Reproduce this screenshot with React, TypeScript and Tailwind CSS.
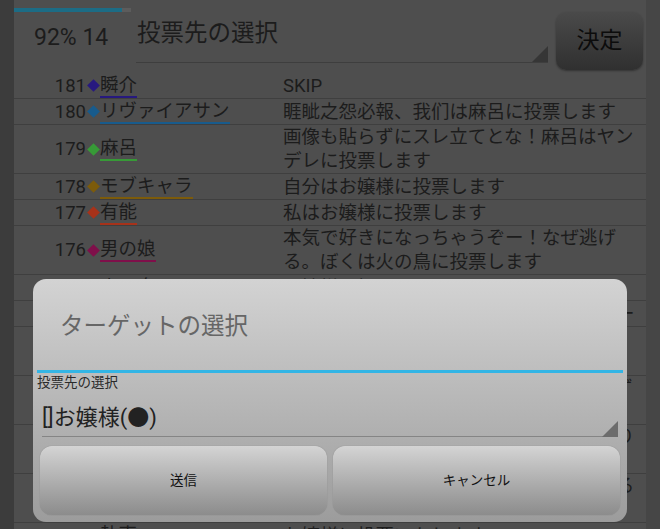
import React from "react";

type Row = {
  no: number;
  name: string;
  color: string;
  lines: string[];
};

const rows: Row[] = [
  { no: 181, name: "瞬介", color: "#27197f", lines: ["SKIP"] },
  { no: 180, name: "リヴァイアサン", color: "#185b8c", lines: ["睚眦之怨必報、我们は麻呂に投票します"] },
  { no: 179, name: "麻呂", color: "#379a37", lines: ["画像も貼らずにスレ立てとな！麻呂はヤン", "デレに投票します"] },
  { no: 178, name: "モブキャラ", color: "#7c5b0b", lines: ["自分はお嬢様に投票します"] },
  { no: 177, name: "有能", color: "#a7321a", lines: ["私はお嬢様に投票します"] },
  { no: 176, name: "男の娘", color: "#7f0f4a", lines: ["本気で好きになっちゃうぞー！なぜ逃げ", "る。ぼくは火の鳥に投票します"] },
  { no: 175, name: "火の鳥", color: "#a7321a", lines: ["お嬢様に投票するよ"] },
  { no: 174, name: "お嬢様", color: "#7c5b0b", lines: ["わたくしは男の娘に投票いたしますわよー"] },
  { no: 173, name: "ハカセ", color: "#379a37", lines: ["ふむ、データによれば有能が怪しいと", "出ているが今回は男の娘に投票する"] },
  { no: 172, name: "委員長", color: "#185b8c", lines: ["みなさん落ち着いて議論しましょう。まず", "は火の鳥に投票します"] },
  { no: 171, name: "番長", color: "#27197f", lines: ["オレはお嬢様に入れるぜ文句あるやつあり", "かかってこいよ"] },
  { no: 170, name: "妹", color: "#7f0f4a", lines: ["お兄ちゃんと同じにするね。妹もそうする", "投票しますっ！"] },
  { no: 169, name: "執事", color: "#7c5b0b", lines: ["お嬢様に投票いたします"] },
];

const font = "font-['Roboto','Noto_Sans_CJK_JP',sans-serif]";

export default function App() {
  return (
    <div className={`relative flex h-[529px] w-[660px] overflow-hidden bg-[#3d3d3d] ${font}`}>
      <div className="w-[14px] shrink-0 bg-[#3c3c3c]" />
      <div className="flex w-[632px] shrink-0 flex-col bg-[#4e4e4e]">
        {/* header */}
        <div className="flex h-[73px] shrink-0">
          <div className="flex w-[122px] shrink-0 flex-col">
            <div className="mt-[8px] flex h-[4px] w-[117px]">
              <div className="w-[108px] bg-[#1c6c85]" />
              <div className="flex-1 bg-[#5c5c5c]" />
            </div>
            <div className="mt-[13px] pl-[20px] text-[23px] leading-[26px] text-[#1c1c1c]">92% 14</div>
          </div>
          <div className="flex h-[63px] w-[412px] shrink-0 items-start justify-between border-b border-[#3e3e3e]">
            <span className="pl-[1px] pt-[18px] text-[23.5px] leading-[30px] text-[#1c1c1c]">投票先の選択</span>
            <svg className="mt-[46px]" width="16" height="16" viewBox="0 0 16 16">
              <polygon points="16,0 16,16 0,16" fill="#363636" />
            </svg>
          </div>
          <div className="ml-[8px] mt-[12px] flex h-[58px] w-[87px] items-center justify-center rounded-[10px] bg-gradient-to-b from-[#4a4a4a] to-[#303030] shadow-[0_1px_2px_rgba(0,0,0,0.35)]">
            <span className="text-[23px] text-[#0c0c0c]">決定</span>
          </div>
        </div>

        {/* list */}
        {rows.map((row) => (
          <div key={row.no} className="flex shrink-0 border-b border-[#3f3f3f] text-[18.5px] leading-[24px] text-[#1c1c1c]">
            <div className={`flex w-[269px] shrink-0 items-center ${row.lines.length > 1 ? "h-[48px]" : "h-[25px]"}`}>
              <span className="w-[72px] text-right">{row.no}</span>
              <span className="flex w-[14px] justify-center">
                <span className="h-[9px] w-[9px] rotate-45" style={{ backgroundColor: row.color }} />
              </span>
              <span className="border-b-2 leading-[22px]" style={{ borderColor: row.color }}>
                {row.name}
              </span>
            </div>
            <div className={`flex w-[363px] flex-col justify-center overflow-hidden whitespace-nowrap ${row.lines.length > 1 ? "h-[48px]" : "h-[25px]"}`}>
              {row.lines.map((line) => (
                <span key={line}>{line}</span>
              ))}
            </div>
          </div>
        ))}
      </div>
      <div className="w-[14px] shrink-0 bg-[#464646]" />

      {/* dialog */}
      <div className="absolute left-[33px] top-[279px] flex h-[243px] w-[594px] flex-col rounded-[13px] bg-gradient-to-b from-[#d3d3d3] to-[#9c9c9c]">
        <div className="flex h-[91px] shrink-0 items-center pl-[27px] pt-[5px] text-[23.5px] text-[#666666]">ターゲットの選択</div>
        <div className="mx-[4px] h-[3px] shrink-0 bg-[#33b5e5]" />
        <div className="h-[18px] shrink-0 pl-[4px] text-[13.5px] leading-[18px] text-[#2a2a2a]">投票先の選択</div>
        <div className="mx-[9px] flex h-[46px] shrink-0 items-start justify-between border-b border-[#858585]">
          <span className="pt-[12px] text-[22px] leading-[30px] text-[#222222]">[]お嬢様(●)</span>
          <svg className="mt-[30px]" width="16" height="16" viewBox="0 0 16 16">
            <polygon points="16,0 16,16 0,16" fill="#6c6c6c" />
          </svg>
        </div>
        <div className="mt-[9px] flex h-[69px] shrink-0 gap-[6px] px-[7px]">
          {["送信", "キャンセル"].map((label) => (
            <div
              key={label}
              className="flex flex-1 items-center justify-center rounded-[12px] bg-gradient-to-b from-[#d4d4d4] to-[#8c8c8c] text-[13.5px] text-[#111111] shadow-[0_0_1px_rgba(0,0,0,0.3)]"
            >
              {label}
            </div>
          ))}
        </div>
      </div>
    </div>
  );
}
